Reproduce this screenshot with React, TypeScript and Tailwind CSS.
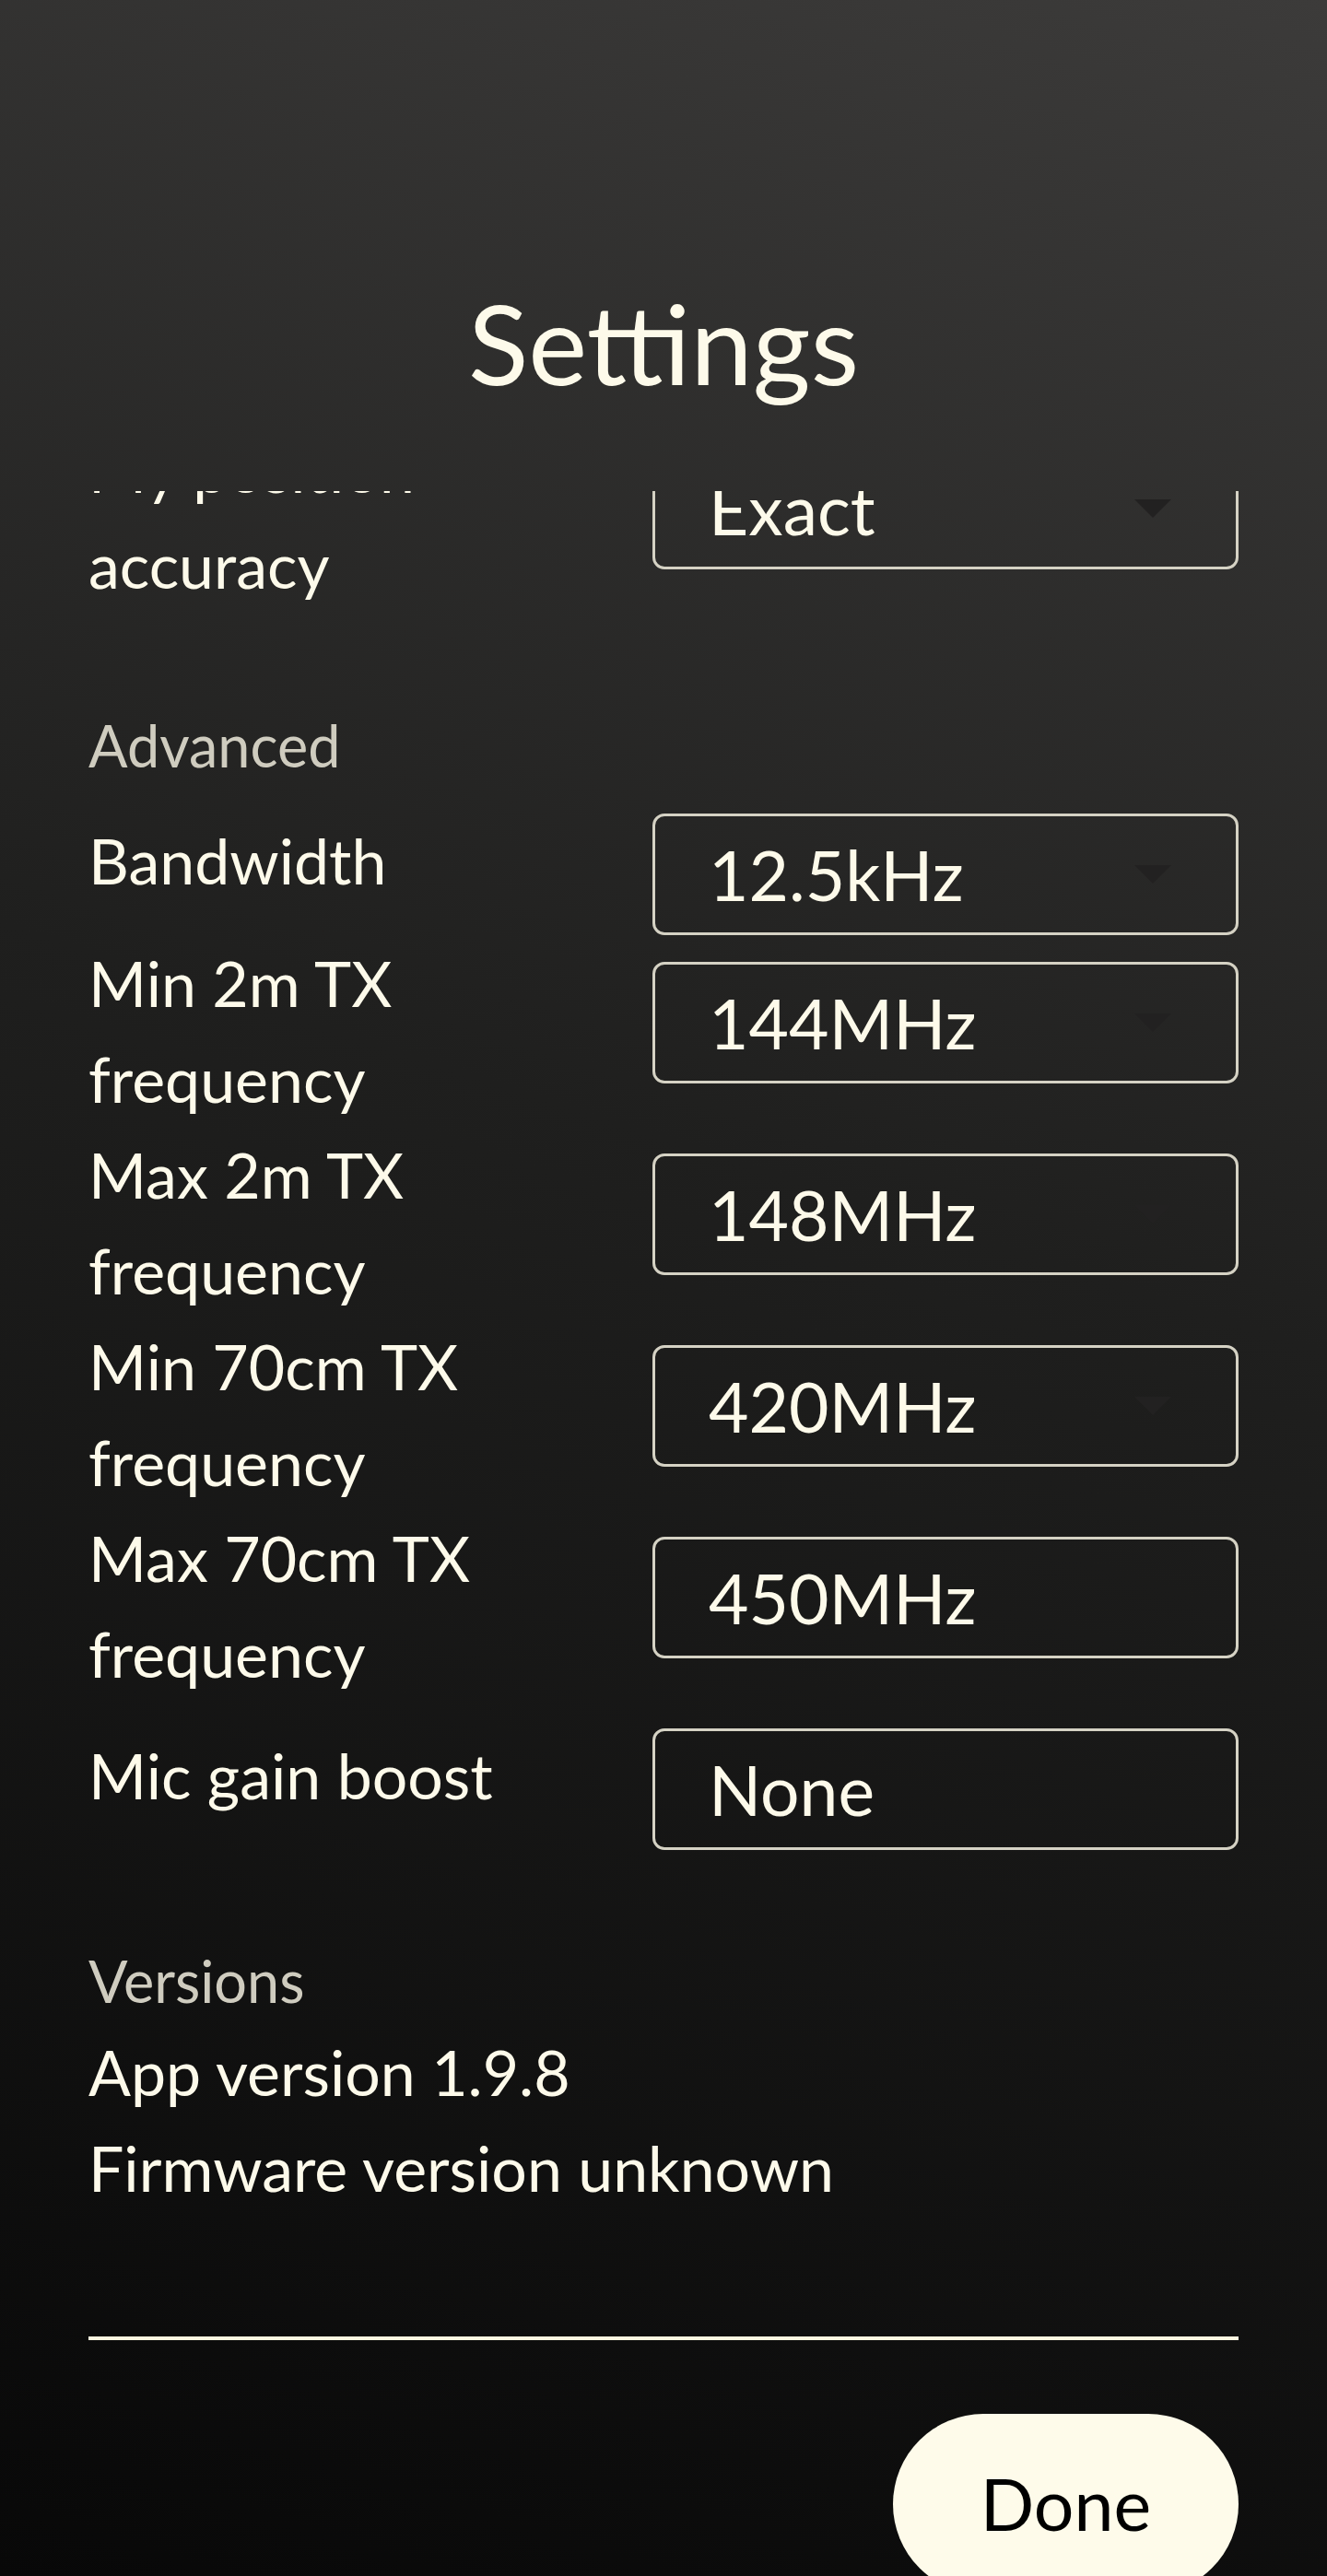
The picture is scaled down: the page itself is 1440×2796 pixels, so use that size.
const advanced = [
  { label: 'Bandwidth', value: '12.5kHz', twoLines: false, arrow: true },
  { label: 'Min 2m TX frequency', value: '144MHz', twoLines: true, arrow: true },
  { label: 'Max 2m TX frequency', value: '148MHz', twoLines: true, arrow: true },
  { label: 'Min 70cm TX frequency', value: '420MHz', twoLines: true, arrow: true },
  { label: 'Max 70cm TX frequency', value: '450MHz', twoLines: true, arrow: false },
  { label: 'Mic gain boost', value: 'None', twoLines: false, arrow: false },
];

const Select = ({ value, arrow }: { value: string; arrow: boolean }) => (
  <div className="flex h-[132px] w-[636px] shrink-0 items-center justify-between rounded-[13px] border-[3px] border-[#d5d2c4] pl-[58px] pr-[70px]">
    <span className="text-[75px] leading-none">{value}</span>
    {arrow && (
      <svg width="40" height="20" viewBox="0 0 40 20">
        <path d="M0 0h40L20 20z" fill="#222121" />
      </svg>
    )}
  </div>
);

type RowProps = { label: string; value: string; twoLines: boolean; arrow: boolean };

const Row = ({ label, value, twoLines, arrow }: RowProps) => (
  <div className="flex items-start">
    <div className={`flex-1 pr-10 text-[68px] leading-[104px] ${twoLines ? '-mt-[29px]' : '-mt-px'}`}>
      {label}
    </div>
    <Select value={value} arrow={arrow} />
  </div>
);

export default function App() {
  return (
    <div className="flex h-[2796px] w-full flex-col overflow-hidden bg-[linear-gradient(198deg,#3c3b3a_0%,#1f1f1e_45%,#080808_100%)] font-['Lato',sans-serif] text-[#fdfaea]">
      <header className="h-[533px] shrink-0 pt-[297px] text-center">
        <h1 className="text-[121px] leading-[150px]">Settings</h1>
      </header>

      <div className="h-[1937px] shrink-0 overflow-hidden px-[96px]">
        {/* scrolled list, first row is cut by the viewport */}
        <div className="-mt-[47px]">
          <Row label="My position accuracy" value="Exact" twoLines arrow />

          <h2 className="mt-[96px] mb-[27px] text-[63px] leading-[95px] text-[#cfccbf]">Advanced</h2>
          <div className="flex flex-col gap-[29px]">
            {advanced.map((row) => (
              <Row key={row.label} {...row} />
            ))}
          </div>

          <h2 className="mt-[94px] text-[63px] leading-[95px] text-[#cfccbf]">Versions</h2>
          <p className="text-[68px] leading-[104px]">App version 1.9.8</p>
          <p className="text-[68px] leading-[104px]">Firmware version unknown</p>
        </div>
      </div>

      <div className="mx-[96px] mt-[66px] h-[4px] shrink-0 bg-[#fdf8e1]" />

      <button className="mt-[80px] mr-[96px] flex h-[196px] w-[375px] shrink-0 items-center justify-center self-end rounded-full bg-[#fefbea] text-[77px] text-black">
        Done
      </button>
    </div>
  );
}
